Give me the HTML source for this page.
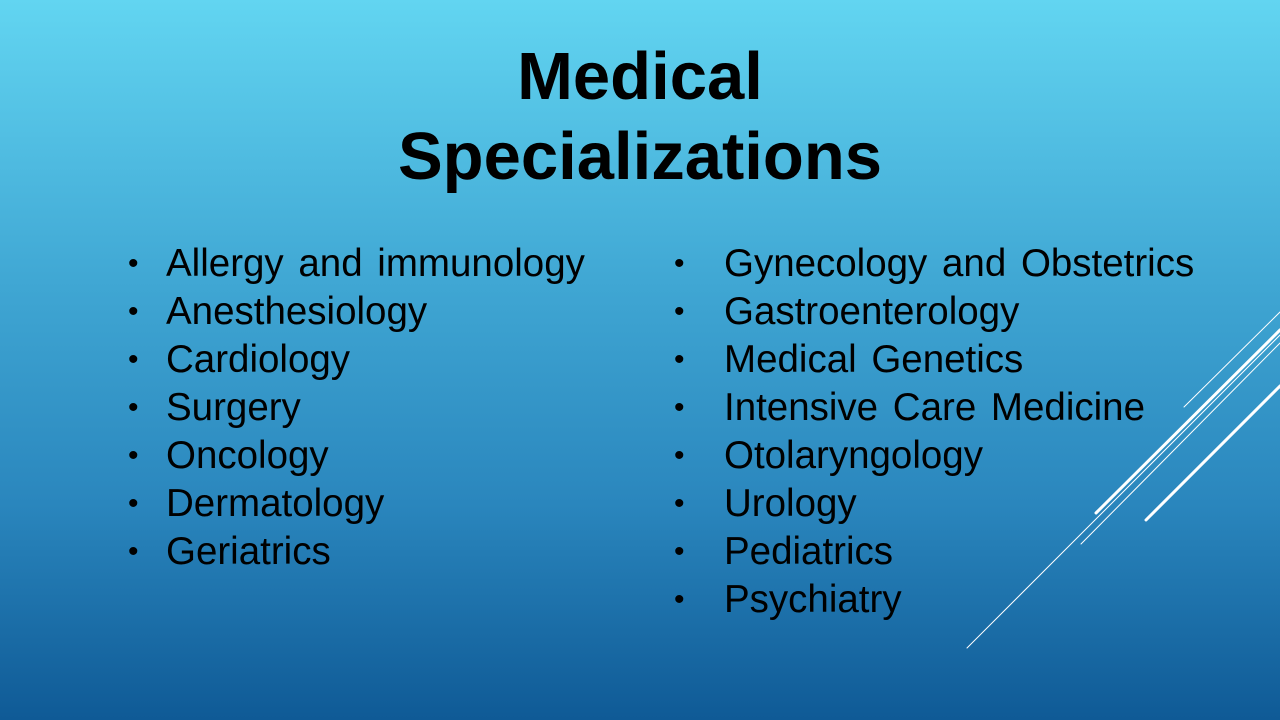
<!DOCTYPE html>
<html><head><style>
html,body{margin:0;padding:0}
body{width:1280px;height:720px;overflow:hidden;position:relative;
background:linear-gradient(to bottom,#62d5f1 0%,#3fa6d3 40%,#2a86bd 70%,#0f5a96 100%);
font-family:"Liberation Sans",Arial,sans-serif;color:#000}
h1{position:absolute;top:37px;left:0;width:1280px;margin:0;text-align:center;font-size:67px;font-weight:bold;line-height:80px}
ul{position:absolute;margin:0;padding:0;list-style:none;font-size:38.5px;line-height:48px;word-spacing:4px}
li{position:relative;white-space:nowrap}
li:before{content:"•";position:absolute;font-size:30px}
.l{left:166px;top:240px}.l li:before{left:-38px}
.r{left:724px;top:240px}.r li:before{left:-50px}
svg{position:absolute;left:0;top:0}
</style></head><body>
<h1>Medical<br>Specializations</h1>
<ul class="l"><li>Allergy and immunology</li><li>Anesthesiology</li><li>Cardiology</li><li>Surgery</li><li>Oncology</li><li>Dermatology</li><li>Geriatrics</li></ul>
<ul class="r"><li>Gynecology and Obstetrics</li><li>Gastroenterology</li><li>Medical Genetics</li><li>Intensive Care Medicine</li><li>Otolaryngology</li><li>Urology</li><li>Pediatrics</li><li>Psychiatry</li></ul>
<svg width="1280" height="720">
<g stroke="#fff" stroke-linecap="round" fill="none">
<line x1="1184" y1="407" x2="1280" y2="312" stroke-width="1"/>
<line x1="1096" y1="513" x2="1280" y2="330" stroke-width="3"/>
<line x1="1081" y1="544" x2="1280" y2="343" stroke-width="1"/>
<line x1="967" y1="648" x2="1280" y2="335" stroke-width="1"/>
<line x1="1146" y1="520" x2="1280" y2="386" stroke-width="3"/>
</g></svg>
</body></html>
